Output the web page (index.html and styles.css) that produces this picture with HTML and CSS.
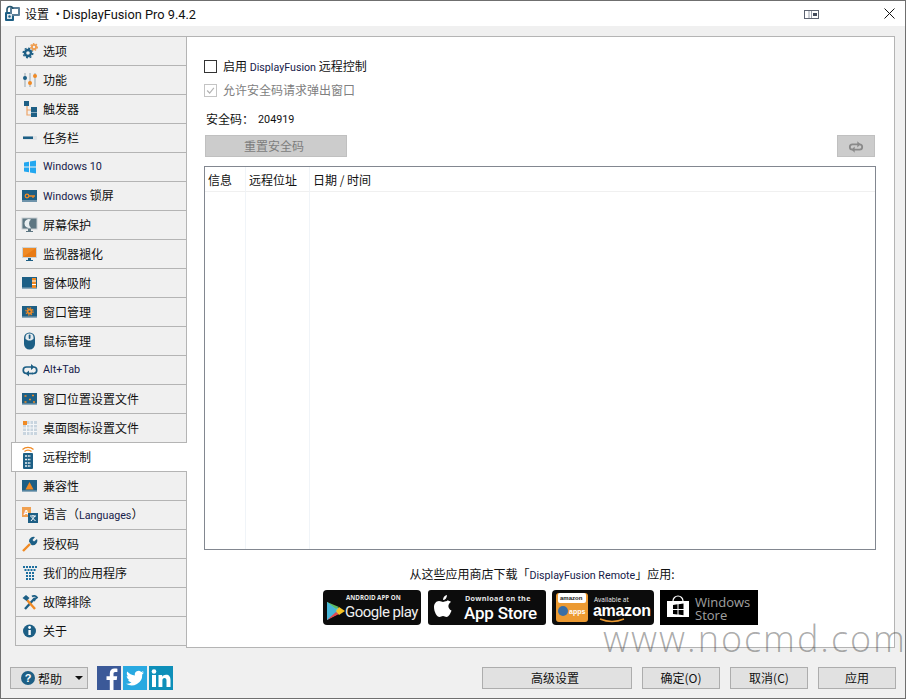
FILE: index.html
```html
<!DOCTYPE html>
<html lang="zh">
<head>
<meta charset="utf-8">
<title>设置 • DisplayFusion Pro 9.4.2</title>
<link rel="stylesheet" href="styles.css">
</head>
<body>
<div class="window">
  <header class="titlebar">
    <svg class="app-icon" viewBox="0 0 17 17"><rect x="1" y="7" width="9" height="9" rx="1" fill="#1d5f85"/><rect x="6" y="2" width="10" height="9" rx="1" fill="#5b7f98"/><path d="M3 7V4.500a3 3 0 0 1 6 0V7" fill="none" stroke="#25566f" stroke-width="1.600"/><rect x="8" y="4" width="6" height="5" fill="#fff"/><rect x="3" y="9" width="5" height="5" fill="#dfe8ee"/><circle cx="5.500" cy="11.500" r="1.200" fill="#1d5f85"/></svg>
    <span class="title-text">设置 • <span class="title-lat">DisplayFusion Pro 9.4.2</span></span>
    <svg class="snap-icon" viewBox="0 0 16 10"><rect x=".5" y="1.500" width="14" height="8" fill="#fff" stroke="#5e6472"/><path d="M5 2v7M7.500 2v7" stroke="#9aa0ac"/><rect x="9" y="4" width="4" height="3" fill="#444c5c"/></svg>
    <svg class="close-icon" viewBox="0 0 11 11"><path d="M.5.500l10 10M10.500.500l-10 10" stroke="#111" fill="none"/></svg>
  </header>

  <main class="main">
    <nav class="sidebar">
      <div class="row"><svg class="ico" viewBox="0 0 18 18"><circle cx="7" cy="11" r="3" fill="none" stroke="#1d5f85" stroke-width="2.400"/><circle cx="7" cy="11" r="4.800" fill="none" stroke="#1d5f85" stroke-width="1.400" stroke-dasharray="2 1.700"/><circle cx="13" cy="5" r="2.100" fill="none" stroke="#ee9a4a" stroke-width="1.800"/><circle cx="13" cy="5" r="3.400" fill="none" stroke="#ee9a4a" stroke-width="1.200" stroke-dasharray="1.500 1.400"/></svg><span>选项</span></div>
      <div class="row"><svg class="ico" viewBox="0 0 18 18"><path d="M4 2v14M9 2v14M14 2v14" stroke="#b9c2c8" stroke-width="1.600"/><circle cx="4" cy="7" r="2" fill="#1d5f85"/><circle cx="9" cy="12" r="2" fill="#f08a24"/><circle cx="14" cy="5" r="2" fill="#f08a24"/></svg><span>功能</span></div>
      <div class="row"><svg class="ico" viewBox="0 0 18 18"><path d="M6 6v9h4M6 10h4" fill="none" stroke="#eda468" stroke-width="1.200"/><rect x="3" y="1" width="5" height="5" fill="#1d5f85"/><rect x="10" y="7" width="6" height="5" fill="#1d5f85"/><rect x="10" y="12.500" width="6" height="4.500" fill="#1d5f85"/></svg><span>触发器</span></div>
      <div class="row"><svg class="ico" viewBox="0 0 18 18"><rect x="2" y="7" width="14" height="4" rx="1" fill="#dfe3e6"/><rect x="2" y="7.500" width="10" height="2.500" fill="#1d5f85"/></svg><span>任务栏</span></div>
      <div class="row"><svg class="ico" viewBox="0 0 18 18"><path d="M3 4.500l5-.8V8.600H3zM9 3.500l6-1V8.600H9zM3 9.500h5v4.800l-5-.8zM9 9.500h6V15.500l-6-1z" fill="#22a7f0"/></svg><span class="lat">Windows 10</span></div>
      <div class="row"><svg class="ico" viewBox="0 0 18 18"><rect x="1" y="3" width="15" height="12" fill="#1d5f85"/><rect x="1" y="13" width="15" height="2" fill="#6e93aa"/><circle cx="6" cy="9" r="1.800" fill="none" stroke="#f08a24" stroke-width="1.300"/><path d="M8 9h6M12 9v2" stroke="#f08a24" stroke-width="1.300"/></svg><span class="lat">Windows <span class="cjk">锁屏</span></span></div>
      <div class="row"><svg class="ico" viewBox="0 0 18 18"><rect x="1" y="2" width="15" height="11" fill="#5d7682" stroke="#c7cdd1"/><path d="M10 3.500a4.500 4.500 0 1 0 0 8 5 5 0 0 1 0-8z" fill="#e9eef0"/><path d="M7 13h3v2h2v1H5v-1h2z" fill="#5d7682"/></svg><span>屏幕保护</span></div>
      <div class="row"><svg class="ico" viewBox="0 0 18 18"><rect x="1" y="2" width="15" height="11" fill="#c9d2d8"/><rect x="2" y="3" width="13" height="9" fill="#f08a24"/><path d="M2 12l13-9v9z" fill="#e87a14"/><path d="M7 13h3v2h2v1H5v-1h2z" fill="#1d5f85"/></svg><span>监视器褪化</span></div>
      <div class="row"><svg class="ico" viewBox="0 0 18 18"><rect x="1" y="3" width="15" height="12" fill="#1d5f85"/><rect x="1" y="13.500" width="15" height="1.500" fill="#8ba9bb"/><rect x="11" y="4" width="4" height="10" fill="#f08a24"/><path d="M11 7h4M11 10.500h4" stroke="#fff"/></svg><span>窗体吸附</span></div>
      <div class="row"><svg class="ico" viewBox="0 0 18 18"><rect x="1" y="3" width="15" height="12" fill="#1d5f85"/><rect x="1" y="13.500" width="15" height="1.500" fill="#8ba9bb"/><circle cx="8.500" cy="8.500" r="2" fill="none" stroke="#f08a24" stroke-width="1.800"/><circle cx="8.500" cy="8.500" r="3.600" fill="none" stroke="#f08a24" stroke-width="1.200" stroke-dasharray="1.500 1.300"/></svg><span>窗口管理</span></div>
      <div class="row"><svg class="ico" viewBox="0 0 18 18"><path d="M3 6a5.500 5.500 0 0 1 11 0v6a5.500 5.500 0 0 1-11 0z" fill="#1d5f85"/><path d="M4.500 7V5.500a4 4 0 0 1 8 0V7L10 8.500H7z" fill="#e4eaee"/><rect x="7.700" y="2.500" width="1.800" height="4.500" rx=".9" fill="#1d5f85"/></svg><span>鼠标管理</span></div>
      <div class="row"><svg class="ico" viewBox="0 0 18 18"><path d="M7 12.500H5.500a3 3 0 0 1 0-6.500H12M11 12.500h1.500a3 3 0 0 0 0-6.500" fill="none" stroke="#1d5f85" stroke-width="1.700"/><path d="M10 3l3.500 3-3.500 3zM8 9.500l-3.500 3 3.500 3z" fill="#1d5f85"/><path d="M6 12.500h6" stroke="#1d5f85" stroke-width="1.700"/></svg><span class="lat">Alt+Tab</span></div>
      <div class="row"><svg class="ico" viewBox="0 0 18 18"><rect x="1" y="3" width="15" height="12" fill="#1d5f85"/><rect x="1" y="13.500" width="15" height="1.500" fill="#8ba9bb"/><path d="M3.500 6h2M11 5.500h2M8 9.500h2M3.500 12h2M12 12h2" stroke="#f08a24" stroke-width="1.400"/></svg><span>窗口位置设置文件</span></div>
      <div class="row"><svg class="ico" viewBox="0 0 18 18"><rect x="2" y="2" width="14" height="14" fill="#c9d5df"/><path d="M2 5.500h14M2 9h14M2 12.500h14M5.500 2v14M9 2v14M12.500 2v14" stroke="#f4f6f8"/><rect x="2" y="2" width="4" height="4" fill="#f08a24"/></svg><span>桌面图标设置文件</span></div>
      <div class="row sel"><svg class="ico ico-tall" viewBox="0 0 18 25"><path d="M1.500 4.500a8 8 0 0 1 11 0M3.500 6.500a5 5 0 0 1 7 0" fill="none" stroke="#f08a24" stroke-width="1.200"/><rect x="2" y="8" width="10" height="16" rx="1" fill="#1d5f85"/><path d="M4 11h6M4 14.500h6M4 18h6M4 21h6" stroke="#e8eef2" stroke-width="1.700" stroke-dasharray="2 .8"/></svg><span>远程控制</span></div>
      <div class="row"><svg class="ico" viewBox="0 0 18 18"><rect x="1" y="3" width="15" height="12" fill="#1d5f85"/><rect x="1" y="13.500" width="15" height="1.500" fill="#8ba9bb"/><path d="M8.500 5l4 7.500h-8z" fill="#f08a24"/></svg><span>兼容性</span></div>
      <div class="row"><svg class="ico" viewBox="0 0 18 18"><rect x="1" y="1" width="9" height="10" fill="#f0a050"/><text x="2.500" y="9" class="ico-letter">A</text><rect x="7" y="7" width="10" height="10" fill="#1d5f85"/><path d="M9 10h6M12 9v1M10 15l4-5M10.500 11l4 4" stroke="#fff" fill="none"/></svg><span>语言（<span class="lat inl">Languages</span>）</span></div>
      <div class="row"><svg class="ico" viewBox="0 0 18 18"><path d="M2 16l7-7" stroke="#f08a24" stroke-width="2.400"/><path d="M8 6.500a4.500 4.500 0 0 1 6-4.500l-2.500 3 1.500 1.500 3-2.500a4.500 4.500 0 0 1-5.500 6z" fill="#1d5f85"/></svg><span>授权码</span></div>
      <div class="row"><svg class="ico" viewBox="0 0 18 18"><path d="M2 3h15M3.500 6h12M5 9h9M5 12h9M5 15h9" stroke="#1d6f9f" stroke-width="2" stroke-dasharray="2 1"/></svg><span>我们的应用程序</span></div>
      <div class="row"><svg class="ico" viewBox="0 0 18 18"><path d="M4 16L14 5" stroke="#1d5f85" stroke-width="2.400"/><path d="M11 3.500a3.500 3.500 0 0 1 5 1l-2 1.500-1 2" fill="none" stroke="#1d5f85" stroke-width="1.800"/><path d="M14 16L6 7" stroke="#f08a24" stroke-width="2.400"/><path d="M1.500 5L5 2l3.500 3-3 3z" fill="#1d5f85"/></svg><span>故障排除</span></div>
      <div class="row"><svg class="ico" viewBox="0 0 18 18"><circle cx="8.500" cy="9" r="6.500" fill="#1d5f85"/><rect x="7.400" y="8" width="2.400" height="5" fill="#fff"/><circle cx="8.600" cy="5.500" r="1.400" fill="#fff"/></svg><span>关于</span></div>
    </nav>

    <section class="panel">
      <label class="check"><span class="box"></span><span>启用 <span class="lat inl">DisplayFusion</span> 远程控制</span></label>
      <label class="check check-off"><span class="box box-off"><svg viewBox="0 0 13 13"><path d="M2.500 6.500l3 3 5-6" fill="none" stroke="#b4b4b4" stroke-width="1.400"/></svg></span><span>允许安全码请求弹出窗口</span></label>
      <div class="code"><span>安全码：</span><span class="lat code-num">204919</span></div>
      <div class="actions">
        <div class="btn-off btn-reset">重置安全码</div>
        <div class="btn-off btn-loop"><svg viewBox="0 0 18 14"><path d="M6 10.500H5a3 3 0 0 1 0-6h7M12 4.500h1a3 3 0 0 1 0 6H6" fill="none" stroke="#8a8a8a" stroke-width="2"/><path d="M10.500 1l3.500 3.500-3.500 3.500zM7.500 7l-3.500 3.500 3.500 3.500z" fill="#8a8a8a"/></svg></div>
      </div>
      <div class="table">
        <div class="th col-a">信息</div>
        <div class="th col-b">远程位址</div>
        <div class="th">日期 / 时间</div>
        <div class="col-a"></div>
        <div class="col-b"></div>
        <div></div>
      </div>
      <p class="stores-text">从这些应用商店下载「<span class="lat inl">DisplayFusion Remote</span>」应用:</p>
      <div class="badges">
        <svg class="badge badge-google" viewBox="0 0 98 35"><rect width="98" height="35" rx="4" fill="#0c0c0c"/><path d="M4 12l16 9-16 9z" fill="#4fc3e8"/><path d="M4 12l11 9-11 9z" fill="#46b6d8"/><path d="M4 12l9 7 3-2z" fill="#5dbb63"/><path d="M4 30l9-8 3 2z" fill="#e5484d"/><path d="M16 17l6 4-6 4-3-4z" fill="#f6c224"/><text x="23" y="10" class="b-small">ANDROID APP ON</text><text x="22" y="27" class="b-big">Google play</text></svg>
        <svg class="badge badge-apple" viewBox="0 0 118 35"><rect width="118" height="35" rx="3" fill="#0c0c0c"/><path d="M19 11c-2 0-3 1-4 1s-2-1-4-1c-3 0-5 3-5 6 0 5 3 10 5.500 10 1.500 0 2-1 3.500-1s2 1 3.500 1c2 0 4-3.500 5-6.500-4-2-4-6.500-.5-8.500-1-1-2.500-1.500-4-1.500zM15 10c0-3 2-4.500 4-5 0 3-2 5-4 5z" fill="#fff"/><text x="37" y="11" class="b-small b-wide">Download on the</text><text x="36" y="29" class="b-bold">App Store</text></svg>
        <svg class="badge badge-amazon" viewBox="0 0 102 35"><rect width="102" height="35" rx="4" fill="#0c0c0c"/><rect x="4" y="3" width="32" height="29" rx="3" fill="#ec9a32"/><rect x="6" y="3" width="28" height="10" rx="2" fill="#fff"/><text x="8" y="10" class="b-tiny">amazon</text><circle cx="11" cy="21" r="5" fill="#3a6ea5"/><text x="17" y="24" class="b-apps">apps</text><text x="42" y="12" class="b-tiny2">Available at</text><text x="41" y="26" class="b-amz">amazon</text><path d="M48 29q12 5 24 0" fill="none" stroke="#ec9a32" stroke-width="1.500"/></svg>
        <svg class="badge badge-ms" viewBox="0 0 98 35"><rect width="98" height="35" fill="#000"/><path d="M7 11h22v16H7z" fill="#fff"/><path d="M13 11a5 5 0 0 1 10 0" fill="none" stroke="#fff" stroke-width="1.200"/><path d="M13 15l4.500-.7V19H13zM18.500 14.200l5-.7V19h-5zM13 20h4.500v4.500L13 24zM18.500 20h5v5.200l-5-.7z" fill="#000"/><text x="35" y="17" class="b-ms">Windows</text><text x="35" y="30" class="b-ms">Store</text></svg>
      </div>
    </section>
  </main>

  <footer class="footer">
    <div class="btn btn-help"><svg class="help-ico" viewBox="0 0 14 14"><circle cx="7" cy="7" r="7" fill="#1d5f85"/><text x="7" y="11" class="help-q">?</text></svg><span>帮助</span><svg class="caret" viewBox="0 0 8 4"><path d="M0 0h8L4 4z" fill="#111"/></svg></div>
    <div class="socials">
      <svg class="soc" viewBox="0 0 24 24"><rect width="24" height="24" fill="#3b5998"/><path d="M16.500 24V14h3.200l.5-3.800h-3.700V8c0-1.100.4-1.900 1.900-1.900h2V2.700c-.5-.1-1.500-.2-2.800-.2-2.900 0-4.800 1.700-4.800 4.900v2.800H9.500V14h3.300v10z" fill="#fff"/></svg>
      <svg class="soc" viewBox="0 0 24 24"><rect width="24" height="24" fill="#29a9e1"/><path d="M21 6.500c-.7.300-1.400.5-2.100.6.800-.5 1.300-1.200 1.600-2-.7.400-1.500.7-2.300.9a3.700 3.700 0 0 0-6.300 3.400C8.800 9.200 6.100 7.800 4.300 5.500c-1 1.700-.5 3.800 1.100 4.900-.6 0-1.200-.2-1.700-.5 0 1.800 1.300 3.300 3 3.700-.5.100-1.100.2-1.700.1.500 1.500 1.900 2.500 3.500 2.600A7.500 7.500 0 0 1 3 17.800a10.500 10.500 0 0 0 16.200-9.300c.7-.5 1.300-1.200 1.800-2z" fill="#fff"/></svg>
      <svg class="soc" viewBox="0 0 24 24"><rect width="24" height="24" fill="#0e8fb9"/><rect x="3" y="9" width="4" height="12" fill="#fff"/><circle cx="5" cy="5.500" r="2.300" fill="#fff"/><path d="M9.500 9h3.700v1.700c.7-1.100 2-2 3.800-2 3.200 0 4.500 2 4.500 5.300v7h-4v-6.300c0-1.700-.6-2.700-2-2.700s-2.100 1-2.100 2.700V21h-3.900z" fill="#fff"/></svg>
    </div>
    <div class="btn btn-adv">高级设置</div>
    <div class="btn btn-std">确定(O)</div>
    <div class="btn btn-std">取消(C)</div>
    <div class="btn btn-std">应用</div>
  </footer>

  <div class="watermark">www.nocmd.com</div>
</div>
</body>
</html>
```
FILE: styles.css
```css
* { box-sizing: border-box; }
html, body { margin: 0; padding: 0; }
body {
  width: 906px;
  height: 699px;
  overflow: hidden;
  font-family: "Noto Sans CJK SC", sans-serif;
  font-size: 12px;
  color: #111;
}
.window {
  position: relative;
  width: 906px;
  height: 699px;
  display: flex;
  flex-direction: column;
  background: #f0f0f0;
  border: 1px solid #6f6f6f;
}
.titlebar {
  height: 25px;
  flex: none;
  background: #fff;
  display: flex;
  align-items: center;
  padding: 0 10px 0 3px;
}
.app-icon { width: 17px; height: 17px; flex: none; }
.title-text { margin-left: 4px; font-size: 12px; margin-top: -1px; }
.title-lat { font-family: "Roboto", sans-serif; font-size: 12.800px; margin-left: -4px; }
.snap-icon { width: 16px; height: 10px; margin-left: auto; margin-right: 64px; }
.close-icon { width: 11px; height: 11px; }
.main {
  flex: none;
  height: 622px;
  display: flex;
  padding: 10px 10px 0 14px;
}
.sidebar {
  width: 171px;
  flex: none;
  border-top: 1px solid #b4b4b4;
  height: 610px;
  display: flex;
  flex-direction: column;
}
.row {
  height: 29px;
  flex: none;
  display: flex;
  align-items: center;
  gap: 4px;
  padding-left: 5px;
  border-left: 1px solid #b4b4b4;
  border-bottom: 1px solid #b4b4b4;
  white-space: nowrap;
  line-height: 16px;
}
.row > span { margin-top: -1px; }
.row.sel {
  position: relative;
  z-index: 2;
  margin: -1px -1px 0 -4px;
  height: 30px;
  padding-left: 9px;
  background: #fff;
  border-top: 1px solid #b4b4b4;
}
.ico { width: 18px; height: 18px; flex: none; }
.ico-tall { height: 25px; }
.lat {
  font-family: "Roboto", "Noto Sans CJK SC", sans-serif;
  font-size: 10.800px;
  color: #16204a;
}
.lat.inl { font-size: 10.700px; }
.cjk { font-family: "Noto Sans CJK SC", sans-serif; font-size: 12px; color: #111; }
.ico-letter { font: bold 8px "Liberation Sans", sans-serif; fill: #fff; }
.panel {
  width: 709px;
  height: 612px;
  flex: none;
  background: #fff;
  border: 1px solid #b4b4b4;
  padding: 22px 18px 0 17px;
  display: flex;
  flex-direction: column;
}
.check {
  display: flex;
  align-items: center;
  gap: 6px;
  height: 14px;
  white-space: nowrap;
}
.check > span:last-child { margin-top: -2px; }
.box {
  width: 13px;
  height: 13px;
  flex: none;
  background: #fff;
  border: 1px solid #333;
}
.box svg { display: block; width: 11px; height: 11px; }
.check-off { margin-top: 10px; color: #808080; }
.box-off { border-color: #c4c4c4; }
.code {
  margin-top: 14px;
  margin-left: 2px;
  height: 16px;
  display: flex;
  align-items: center;
  white-space: nowrap;
}
.code > span:first-child { margin-top: -1px; }
.code-num { font-size: 10.800px; margin-left: 4px; color: #111; }
.actions {
  margin-top: 8px;
  height: 22px;
  display: flex;
  justify-content: space-between;
  padding-left: 1px;
}
.btn-off {
  background: #cccccc;
  border: 1px solid #c0c0c0;
  display: flex;
  align-items: center;
  justify-content: center;
  color: #7d7d7d;
  height: 22px;
}
.btn-reset { width: 142px; padding: 0 4px 2px 0; }
.btn-loop { width: 38px; margin-right: 1px; }
.btn-loop svg { width: 16px; height: 13px; }
.table {
  margin-top: 9px;
  height: 384px;
  flex: none;
  display: grid;
  grid-template-columns: 41px 64px 1fr;
  grid-template-rows: 25px 1fr;
  background: #fff;
  border: 1px solid #828790;
}
.th {
  padding-left: 3px;
  display: flex;
  align-items: center;
  white-space: nowrap;
  border-bottom: 1px solid #f0f0f0;
}
.col-a, .col-b { border-right: 1px solid #f0f4f8; }
.stores-text {
  margin: 15px 0 0;
  height: 18px;
  line-height: 18px;
  text-align: center;
  font-size: 12px;
  white-space: nowrap;
  padding-left: 4px;
}
.badges {
  margin-top: 7px;
  margin-left: 119px;
  height: 35px;
  display: flex;
  gap: 7px;
}
.badges .badge { height: 35px; flex: none; display: block; }
.badge-google { width: 98px; }
.badge-apple { width: 118px; }
.badge-amazon { width: 102px; margin-left: -1px; }
.badge-ms { width: 98px; margin-left: -1px; }
.b-small { font: bold 6.200px "Open Sans", sans-serif; fill: #e8e8e8; }
.b-wide { font-size: 7.200px; letter-spacing: .3px; }
.b-big { font: 15px "Roboto", sans-serif; fill: #f0f0f0; letter-spacing: -.5px; }
.b-bold { font: 500 17px "Roboto", sans-serif; fill: #fff; letter-spacing: -.2px; }
.b-tiny { font: bold 6px "Liberation Sans", sans-serif; fill: #222; }
.b-apps { font: bold 7px "Liberation Sans", sans-serif; fill: #fff; }
.b-tiny2 { font: 6.500px "Open Sans", sans-serif; fill: #eee; }
.b-amz { font: bold 16px "Liberation Sans", sans-serif; fill: #fff; letter-spacing: -.3px; }
.b-ms { font: 13px "Open Sans", sans-serif; fill: #a0a0a0; }
.footer {
  flex: 1;
  display: flex;
  align-items: flex-start;
  padding: 19px 9px 0 9px;
}
.btn {
  height: 22px;
  flex: none;
  background: #e1e1e1;
  border: 1px solid #adadad;
  display: flex;
  align-items: center;
  justify-content: center;
  font-size: 12px;
  white-space: nowrap;
  padding-bottom: 2px;
}
.btn-help {
  width: 78px;
  justify-content: flex-start;
  padding-left: 10px;
  padding-bottom: 0;
}
.help-ico { width: 14px; height: 14px; margin-right: 3px; flex: none; }
.help-q { font: bold 11px "Liberation Sans", sans-serif; fill: #fff; text-anchor: middle; }
.caret { width: 8px; height: 4px; margin-left: 13px; }
.socials { display: flex; gap: 2px; margin: -1px 0 0 9px; }
.soc { width: 24px; height: 24px; display: block; }
.btn-adv { width: 150px; margin-left: auto; padding-right: 4px; }
.btn-std { width: 78px; margin-left: 10px; }
.watermark {
  position: absolute;
  left: 602px;
  top: 614px;
  font: 300 36px/48px "Open Sans", sans-serif;
  letter-spacing: 2px;
  color: rgba(70, 70, 70, .45);
  white-space: nowrap;
  pointer-events: none;
}
```
